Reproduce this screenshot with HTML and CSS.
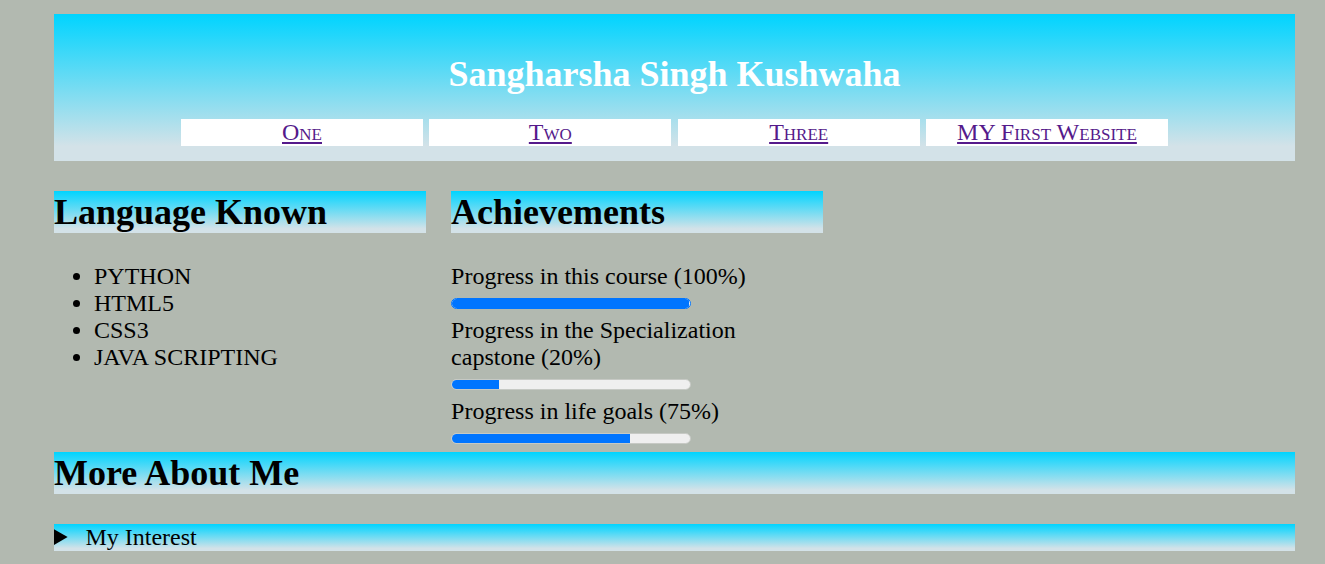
FILE: index.html
```html
<!DOCTYPE html>
<html lang="en">
<head>
<meta charset="utf-8">
<title>Sangharsha Singh Kushwaha</title>
<link rel="stylesheet" href="styles.css">
</head>
<body>
<header class="banner">
  <h1 class="title">Sangharsha Singh Kushwaha</h1>
  <nav>
    <ul class="nav-list">
      <li class="nav-item"><a href="#one">One</a></li>
      <li class="nav-item"><a href="#two">Two</a></li>
      <li class="nav-item"><a href="#three">Three</a></li>
      <li class="nav-item"><a href="#first">MY First Website</a></li>
    </ul>
  </nav>
</header>

<main>
  <div class="columns">
    <section class="col">
      <h1 class="section-title">Language Known</h1>
      <ul class="langs">
        <li>PYTHON</li>
        <li>HTML5</li>
        <li>CSS3</li>
        <li>JAVA SCRIPTING</li>
      </ul>
    </section>
    <section class="col">
      <h1 class="section-title">Achievements</h1>
      <div class="progress-list">
        <div class="progress-label">Progress in this course (100%)</div>
        <div class="progress-row"><div class="bar bar-full"><div class="bar-fill" style="width:100%"></div></div></div>
        <div class="progress-label">Progress in the Specialization capstone (20%)</div>
        <div class="progress-row"><div class="bar"><div class="bar-fill" style="width:20%"></div></div></div>
        <div class="progress-label">Progress in life goals (75%)</div>
        <div class="progress-row"><div class="bar"><div class="bar-fill" style="width:75%"></div></div></div>
      </div>
    </section>
  </div>

  <h1 class="section-title">More About Me</h1>
  <details class="more">
    <summary class="more-summary"><span class="summary-text">My Interest</span></summary>
  </details>
</main>
</body>
</html>
```

FILE: styles.css
```css
html, body {
  margin: 0;
}

body {
  padding: 14px 30px 0 54px;
  background: #b2b9b0;
  font-family: "Liberation Serif", "Times New Roman", serif;
  font-size: 24px;
  color: #000;
}

.banner {
  background: linear-gradient(180deg, #00d4ff 0%, #d3e2e8 90%);
  padding: 39px 0 15px;
  text-align: center;
}

.title {
  margin: 0 0 24px;
  font-size: 36px;
  line-height: 42px;
  font-weight: bold;
  color: #fff;
}

.nav-list {
  list-style: none;
  margin: 0;
  padding: 0;
  display: flex;
  justify-content: center;
  gap: 6.33px;
}

.nav-item {
  width: 242px;
  height: 27px;
  line-height: 27px;
  background: #fff;
  font-variant: small-caps;
  font-size: 24px;
}

.nav-item a {
  color: #551a8b;
  text-decoration: underline;
}

.columns {
  display: flex;
  gap: 2%;
  margin-top: 30px;
}

.col {
  width: 30%;
}

.section-title {
  margin: 0;
  font-size: 36px;
  line-height: 42px;
  font-weight: bold;
  background: linear-gradient(180deg, #00d4ff 0%, #d3e2e8 90%);
}

.langs {
  margin: 30px 0 0;
  padding-left: 40px;
  line-height: 27px;
}

.progress-list {
  margin-top: 30px;
  line-height: 27px;
}

.progress-row {
  height: 27px;
  display: flex;
  align-items: center;
}

.bar {
  width: 240px;
  height: 11px;
  box-sizing: border-box;
  border-radius: 6px;
  background: #efefef;
  border: 1px solid #c6c9c4;
  overflow: hidden;
  position: relative;
}

.bar-full {
  border-color: #0075ff;
}

.bar-fill {
  position: absolute;
  left: -1px;
  top: -1px;
  bottom: -1px;
  background: #0075ff;
}

.more {
  margin-top: 30px;
}

.more-summary {
  background: linear-gradient(180deg, #00d4ff 0%, #d3e2e8 90%);
  line-height: 27px;
  cursor: pointer;
}

.summary-text {
  padding-left: 6px;
}
```
